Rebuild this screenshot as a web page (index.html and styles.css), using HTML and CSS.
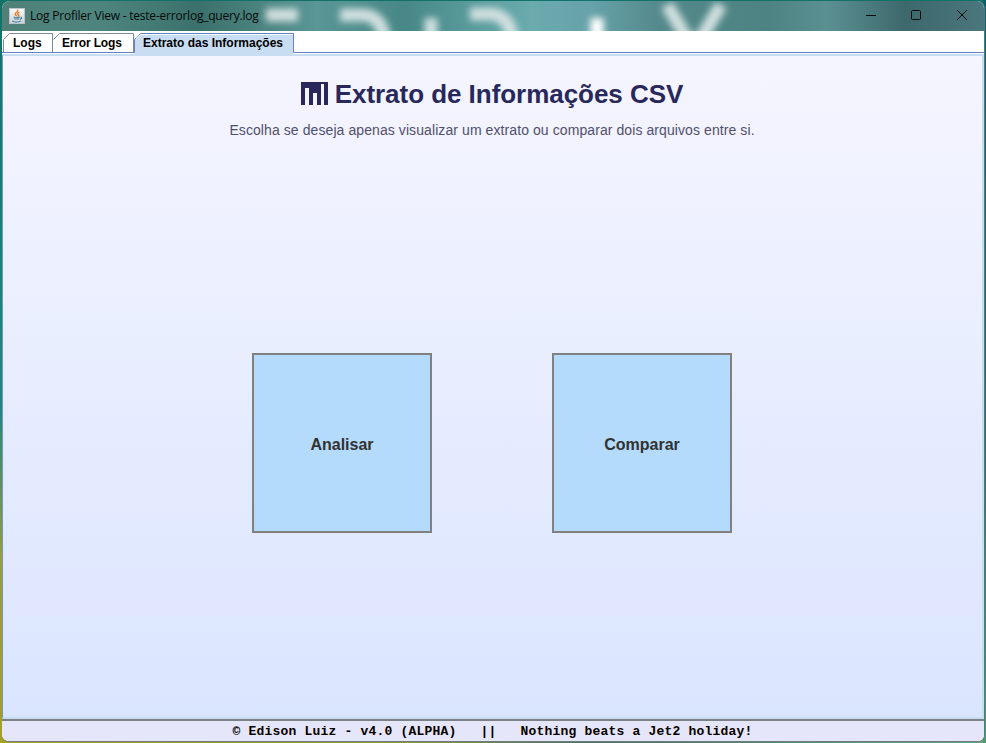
FILE: index.html
```html
<!DOCTYPE html>
<html lang="pt-BR">
<head>
<meta charset="utf-8">
<title>Log Profiler View</title>
<link rel="stylesheet" href="styles.css">
</head>
<body>
<div class="window">
  <header class="titlebar">
    <svg class="wallpaper" viewBox="0 0 982 30" preserveAspectRatio="none">
      <defs>
        <linearGradient id="glass" x1="0" x2="1" y1="0" y2="0">
          <stop offset="0" stop-color="#508078"/><stop offset=".1" stop-color="#4d857e"/>
          <stop offset=".2" stop-color="#3b716c"/><stop offset=".25" stop-color="#477f7b"/>
          <stop offset=".32" stop-color="#599695"/><stop offset=".41" stop-color="#478887"/>
          <stop offset=".54" stop-color="#6aabae"/><stop offset=".6" stop-color="#66a2a8"/>
          <stop offset=".67" stop-color="#54898b"/><stop offset=".78" stop-color="#4d8382"/>
          <stop offset=".84" stop-color="#5b9092"/><stop offset=".92" stop-color="#3d686c"/>
          <stop offset="1" stop-color="#4a777c"/>
        </linearGradient>
        <filter id="soft" filterUnits="userSpaceOnUse" x="240" y="-20" width="520" height="80"><feGaussianBlur stdDeviation="3.600"/></filter>
      </defs>
      <rect width="982" height="30" fill="url(#glass)"/>
      <g fill="none" stroke="#d0dfdf" stroke-width="13" filter="url(#soft)">
        <path d="M264 14H296M338 14H362Q382 16 383 44M429 17V48M468 13H490Q510 16 511 44M665 4L689 44M719 4L695 44"/>
        <path d="M595 17V50" stroke="#fff"/>
      </g>
    </svg>
    <svg class="java" viewBox="0 0 16 16">
      <defs><linearGradient id="tile" x2="0" y2="1"><stop stop-color="#fafafa"/><stop offset="1" stop-color="#c9d0d6"/></linearGradient></defs>
      <rect x=".5" y=".5" width="15" height="15" fill="url(#tile)" stroke="#b9c5c8"/>
      <path d="M8.800 1.500Q9.300 3.300 7.200 4.600T7.700 8M10.500 4Q7.700 5.400 9.200 6.400T8.500 8.500" fill="none" stroke="#e97920" stroke-width="1.300"/>
      <path d="M4.500 9Q7.500 10.400 11 9M5 11H10.500M3 13Q7.500 15 12 13M11.500 9Q14 9.300 11 11.500" fill="none" stroke="#5085a4" stroke-width="1.200"/>
    </svg>
    <span class="title">Log Profiler View - teste-errorlog_query.log</span>
    <svg class="controls" viewBox="0 0 110 14" fill="none" stroke="#080b0b">
      <path d="M2 7.500H12"/><rect x="47.500" y="2.500" width="9" height="9" rx="1"/><path d="M93 2L103 12M103 2L93 12"/>
    </svg>
  </header>
  <nav class="tabs">
    <svg class="tablines" viewBox="0 0 982 25">
      <path d="M1.500 21V8.500L7.500 2.500H50.500V21M51.500 8.500L57.500 2.500H131.500V21" fill="none" stroke="#7a8a99"/>
      <path d="M132.500 25V8.500L138.500 2.500H291.500V25Z" fill="#c8ddf2"/>
      <path d="M0 21.500H132.500V8.500L138.500 2.500H291.500V21.500H982" fill="none" stroke="#6382bf"/>
      <path d="M134 7.500L138.500 3.500H291" fill="none" stroke="#fff"/>
    </svg>
    <span class="tab logs">Logs</span>
    <span class="tab errors">Error Logs</span>
    <span class="tab extract">Extrato das Informações</span>
  </nav>
  <main class="panel">
    <h1><svg class="chart" viewBox="0 0 27 23"><path d="M0 0H27V23H23V2H20V23H16V11H12V23H8V6H4V23H0Z" fill="#28285a"/></svg><span class="heading">Extrato de Informações CSV</span></h1>
    <p>Escolha se deseja apenas visualizar um extrato ou comparar dois arquivos entre si.</p>
    <div class="choices">
      <button>Analisar</button>
      <button>Comparar</button>
    </div>
  </main>
  <footer>© Edison Luiz - v4.0 (ALPHA)   ||   Nothing beats a Jet2 holiday!</footer>
</div>
</body>
</html>
```
FILE: styles.css
```css
* { box-sizing: border-box; }
body {
  margin: 0; height: 743px; overflow: hidden; padding: 1px 1px 1px 2px;
  font-family: "Liberation Sans", Arial, sans-serif;
  background:
    linear-gradient(#0b5f6b, #2f6c68 60%, #4d9c78) right / 3px 100% no-repeat,
    linear-gradient(90deg, #a69f28, #8c9a3c 40%, #41785e 60%, #5fa87c) bottom / 100% 2px no-repeat,
    linear-gradient(#137268 0, #148372 30%, #22877b 55%, #969c42 75%, #a69f28);
}
.window { height: 741px; width: 983px; display: flex; flex-direction: column; overflow: hidden; border-radius: 8px 8px 7px 7px; border-right: 1px solid #56777c; border-bottom: 1px solid #737a7b; background: #fff; }
.titlebar { position: relative; height: 30px; flex: none; display: flex; align-items: center; padding-left: 7px; }
.wallpaper { position: absolute; inset: 0; width: 100%; height: 100%; }
.java { position: relative; width: 16px; height: 16px; flex: none; margin-top: -1px; }
.title { position: relative; margin-left: 5px; margin-top: -2px; width: 230px; font: 12px "Open Sans", sans-serif; letter-spacing: -.22px; color: #050808; white-space: nowrap; }
.controls { position: relative; width: 110px; height: 14px; margin-left: auto; margin-right: 10px; margin-top: -2px; }
.tabs { position: relative; height: 23px; flex: none; display: flex; padding-left: 11px; font-size: 12px; font-weight: bold; line-height: 24px; white-space: nowrap; }
.tablines { position: absolute; left: 0; top: 0; width: 982px; height: 25px; }
.tab { position: relative; color: #000; }
.logs { width: 49px; }
.errors { width: 81px; letter-spacing: -.17px; }
.panel { flex: 1; min-height: 0; display: flex; flex-direction: column; align-items: center; border: 2px solid #c8ddf2; border-left: 1px solid #7793c9; padding-right: 1px; background: linear-gradient(#f5f5ff, #dae5ff); }
h1 { height: 34px; margin: 21px 0 0; display: flex; align-items: center; color: #28285a; font-size: 26px; line-height: 34px; letter-spacing: -.04px; }
.chart { width: 27px; height: 23px; margin-right: 7px; margin-top: -2px; }
p { margin: 10px 0 0; font-size: 14px; line-height: 18px; letter-spacing: .085px; color: #50506e; white-space: nowrap; }
.choices { display: flex; gap: 120px; margin-top: 214px; }
button { width: 180px; height: 180px; border: 2px solid #808080; background: #b4dbfb; color: #323232; font: bold 16px "Liberation Sans", sans-serif; padding: 3px 0 0; }
footer { height: 22px; flex: none; border-top: 2px solid #7b8285; background: #e6e6fa; font: bold 13px/22px "Liberation Mono", monospace; letter-spacing: .2px; text-align: center; white-space: pre; color: #000; padding-right: 1px; }
```
